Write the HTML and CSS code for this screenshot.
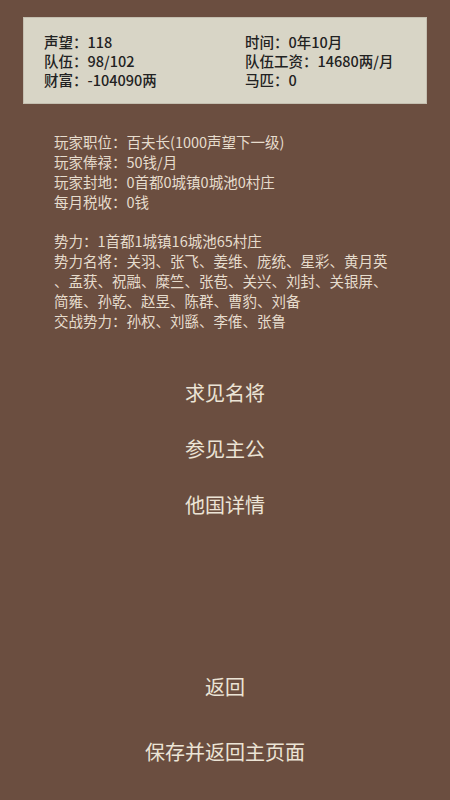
FILE: index.html
```html
<!DOCTYPE html>
<html lang="zh">
<head>
<meta charset="utf-8">
<link rel="stylesheet" href="styles.css">
</head>
<body>
<div class="page">
  <div class="panel">
    <div class="col">
      <div>声望：118</div>
      <div>队伍：98/102</div>
      <div>财富：-104090两</div>
    </div>
    <div class="col">
      <div>时间：0年10月</div>
      <div>队伍工资：14680两/月</div>
      <div>马匹：0</div>
    </div>
  </div>

  <div class="info">
    <div>玩家职位：百夫长(1000声望下一级)</div>
    <div>玩家俸禄：50钱/月</div>
    <div>玩家封地：0首都0城镇0城池0村庄</div>
    <div>每月税收：0钱</div>
  </div>

  <div class="info second">
    <div>势力：1首都1城镇16城池65村庄</div>
    <div class="wrap">势力名将：关羽、张飞、姜维、庞统、星彩、黄月英、孟获、祝融、糜竺、张苞、关兴、刘封、关银屏、简雍、孙乾、赵昱、陈群、曹豹、刘备</div>
    <div>交战势力：孙权、刘繇、李傕、张鲁</div>
  </div>

  <div class="menu">
    <div class="btn">求见名将</div>
    <div class="btn">参见主公</div>
    <div class="btn">他国详情</div>
  </div>

  <div class="bottom">
    <div class="btn">返回</div>
    <div class="btn">保存并返回主页面</div>
  </div>
</div>
</body>
</html>
```

FILE: styles.css
```css
html, body {
  margin: 0;
  padding: 0;
  background: #6b4e40;
}
body {
  font-family: "Noto Sans CJK SC", "Noto Sans", sans-serif;
}
.page {
  width: 450px;
  height: 800px;
  display: flex;
  flex-direction: column;
  box-sizing: border-box;
  padding-top: 17px;
}
.panel {
  margin: 0 23px;
  background: #d8d5c6;
  box-shadow: inset 0 0 0 1px #c4bfb0;
  padding: 15px 0 15px 21px;
  display: grid;
  grid-template-columns: 201px 1fr;
  font-size: 14.5px;
  line-height: 19px;
  color: #222;
  font-weight: 500;
}
.info {
  margin: 28px 0 0 54px;
  font-size: 14.5px;
  line-height: 20px;
  color: #e6dccd;
}
.info.second {
  margin-top: 19px;
}
.wrap {
  width: 342px;
  line-break: anywhere;
}
.menu {
  margin-top: 48px;
  display: flex;
  flex-direction: column;
  align-items: center;
  gap: 28px;
}
.btn {
  font-size: 20px;
  line-height: 28px;
  color: #ece4d6;
}
.bottom {
  margin-top: auto;
  margin-bottom: 34px;
  display: flex;
  flex-direction: column;
  align-items: center;
  gap: 37px;
}
```
